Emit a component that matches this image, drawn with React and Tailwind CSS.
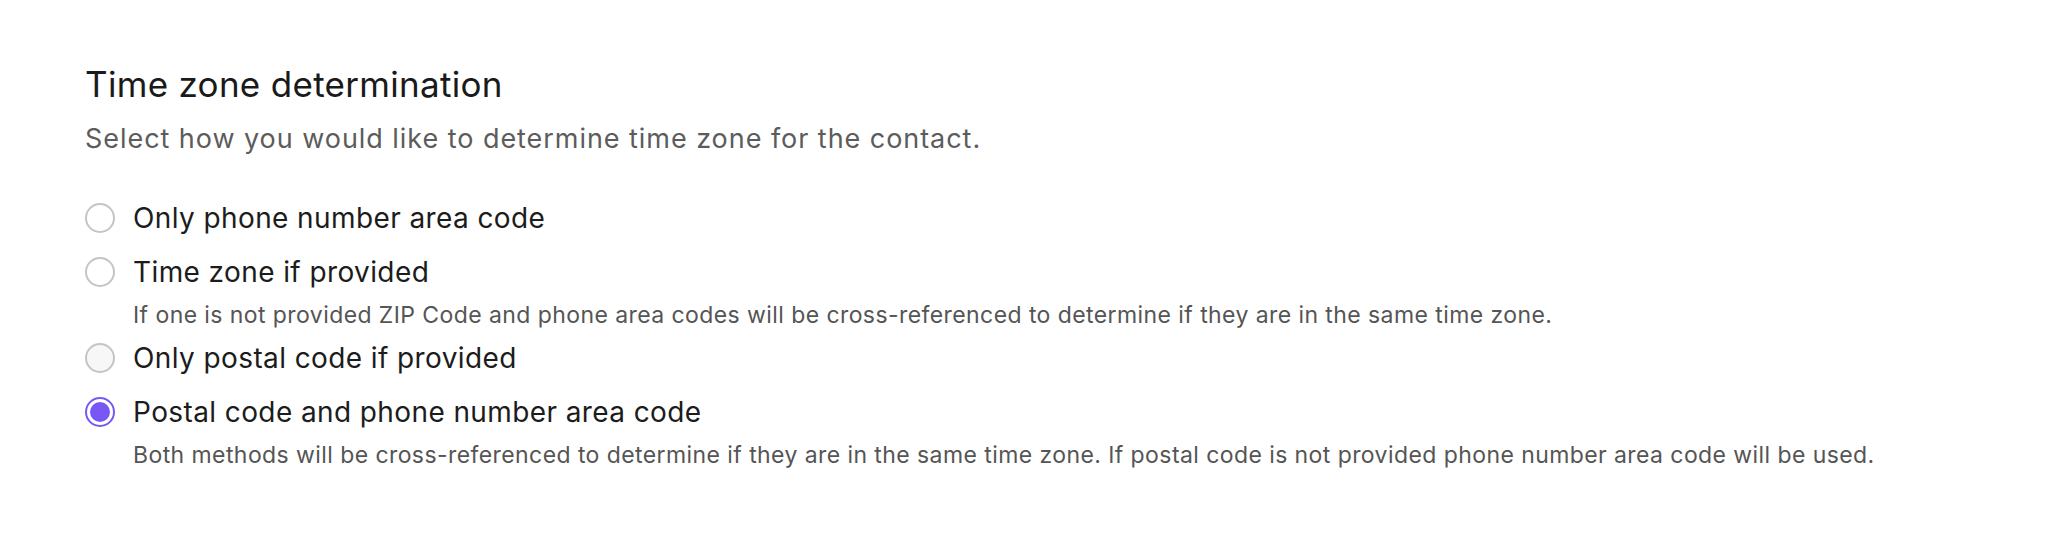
import React, { useState } from "react";

const options = [
  { id: "phone", label: "Only phone number area code" },
  {
    id: "tz",
    label: "Time zone if provided",
    hint: "If one is not provided ZIP Code and phone area codes will be cross-referenced to determine if they are in the same time zone.",
  },
  { id: "postal", label: "Only postal code if provided", hover: true },
  {
    id: "both",
    label: "Postal code and phone number area code",
    hint: "Both methods will be cross-referenced to determine if they are in the same time zone. If postal code is not provided phone number area code will be used.",
  },
];

function Radio({ checked, hover }) {
  if (checked) {
    return (
      <span className="flex items-center justify-center w-[30px] h-[30px] rounded-full border-2 border-[#7857f5] bg-white shrink-0">
        <span className="block w-[20px] h-[20px] rounded-full bg-[#7857f5]"></span>
      </span>
    );
  }
  return (
    <span
      className={
        hover
          ? "block w-[30px] h-[30px] rounded-full border-2 border-[#c4c4c4] bg-[#f7f7f7] shrink-0"
          : "block w-[30px] h-[30px] rounded-full border-2 border-[#c4c4c4] bg-white shrink-0"
      }
    ></span>
  );
}

function App() {
  const [value, setValue] = useState("both");

  return (
    <div className="w-[2054px] h-[548px] bg-white pl-[85px] pt-[62px] font-['Inter',sans-serif]">
      <h2 className="text-[35px] leading-[44px] tracking-[0.3px] text-[#1a1a1a] font-normal">
        Time zone determination
      </h2>
      <p className="mt-[15px] text-[27px] leading-[36px] tracking-[0.95px] text-[#5c5c5c]">
        Select how you would like to determine time zone for the contact.
      </p>
      <div className="mt-[34px] flex flex-col">
        {options.map((opt) => (
          <div key={opt.id}>
            <label
              className="flex items-center gap-[18px] h-[54px] cursor-pointer"
              onClick={() => setValue(opt.id)}
            >
              <Radio checked={value === opt.id} hover={opt.hover} />
              <span className="text-[28px] leading-[36px] tracking-[0.4px] text-[#1c1c1c]">
                {opt.label}
              </span>
            </label>
            {opt.hint && (
              <p className="pl-[48px] text-[23px] leading-[32px] tracking-[0.42px] text-[#555555]">
                {opt.hint}
              </p>
            )}
          </div>
        ))}
      </div>
    </div>
  );
}

export default App;
